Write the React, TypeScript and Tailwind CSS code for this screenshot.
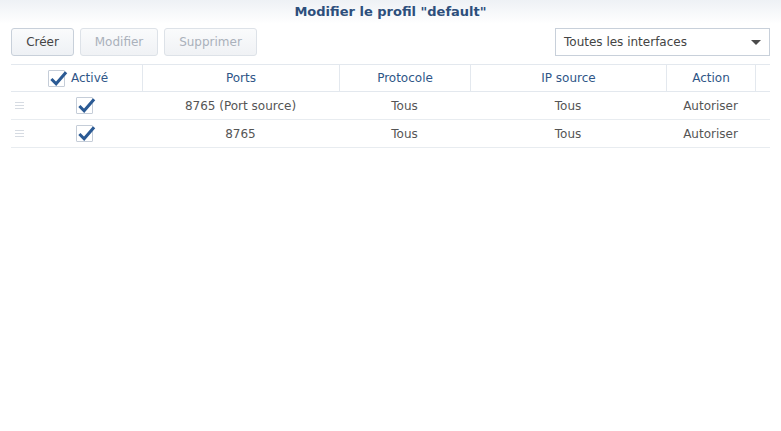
import React from "react";

const font = { fontFamily: '"DejaVu Sans", Verdana, sans-serif' };

function Check({ className = "" }: { className?: string }) {
  return (
    <span className={`relative inline-block w-[17px] h-[17px] border border-[#c5cdd8] bg-white rounded-[1px] ${className}`}>
      <svg viewBox="0 0 20 20" className="absolute left-[0px] top-[-2px] w-[19px] h-[19px]">
        <path d="M2.5 10.5 L7.5 15.5 L18 3.5" fill="none" stroke="#2b5a94" strokeWidth="3.2" strokeLinejoin="miter" />
      </svg>
    </span>
  );
}

function Grip() {
  return (
    <span className="flex flex-col gap-[2px] w-[9px]">
      <span className="h-px bg-[#d6dbe2]" />
      <span className="h-px bg-[#d6dbe2]" />
      <span className="h-px bg-[#d6dbe2]" />
    </span>
  );
}

const rows = [
  { ports: "8765 (Port source)", proto: "Tous", ip: "Tous", action: "Autoriser" },
  { ports: "8765", proto: "Tous", ip: "Tous", action: "Autoriser" },
];

export default function App() {
  return (
    <div className="w-[781px] h-[431px] bg-white text-[12px] text-[#555]" style={font}>
      {/* title bar */}
      <div className="h-[24px] flex items-center justify-center bg-gradient-to-b from-[#eef1f5] to-white">
        <span className="text-[13px] font-bold text-[#2d4f7c]">Modifier le profil "default"</span>
      </div>

      {/* toolbar */}
      <div className="flex items-center justify-between pl-[11px] pr-[11px] mt-[4px] h-[28px]">
        <div className="flex gap-[6px]">
          <button className="h-[28px] w-[63px] rounded-[3px] border border-[#c8d0da] bg-gradient-to-b from-[#fafbfc] to-[#eef1f5] text-[#444]">Créer</button>
          <button className="h-[28px] w-[78px] rounded-[3px] border border-[#dde2e8] bg-gradient-to-b from-[#fafbfc] to-[#f0f2f5] text-[#aab1bb]">Modifier</button>
          <button className="h-[28px] w-[93px] rounded-[3px] border border-[#dde2e8] bg-gradient-to-b from-[#fafbfc] to-[#f0f2f5] text-[#aab1bb]">Supprimer</button>
        </div>
        <div className="h-[28px] w-[215px] border border-[#c8d0da] bg-white flex items-center justify-between pl-[8px] pr-[8px] text-[#444]">
          <span>Toutes les interfaces</span>
          <svg width="10" height="5" viewBox="0 0 10 5"><path d="M0 0 H10 L5 5 Z" fill="#4a4a4a" /></svg>
        </div>
      </div>

      {/* table */}
      <div className="mx-[11px] mt-[8px] w-[759px]">
        <div className="grid grid-cols-[131px_197px_131px_196px_89px_15px] h-[28px] border-t border-b border-[#e3e8ee] text-[#2f5687]">
          <div className="flex items-center pl-[37px] gap-[6px]">
            <Check />
            <span>Activé</span>
          </div>
          <div className="flex items-center justify-center border-l border-[#e3e8ee]">Ports</div>
          <div className="flex items-center justify-center border-l border-[#e3e8ee]">Protocole</div>
          <div className="flex items-center justify-center border-l border-[#e3e8ee]">IP source</div>
          <div className="flex items-center justify-center border-l border-[#e3e8ee]">Action</div>
          <div className="border-l border-[#e3e8ee]" />
        </div>
        {rows.map((r, i) => (
          <div key={i} className="grid grid-cols-[131px_197px_131px_196px_89px_15px] h-[28px] border-b border-[#e8ecf0]">
            <div className="flex items-center pl-[4px]">
              <Grip />
              <Check className="ml-[52px]" />
            </div>
            <div className="flex items-center justify-center">{r.ports}</div>
            <div className="flex items-center justify-center">{r.proto}</div>
            <div className="flex items-center justify-center">{r.ip}</div>
            <div className="flex items-center justify-center">{r.action}</div>
            <div />
          </div>
        ))}
      </div>
    </div>
  );
}
